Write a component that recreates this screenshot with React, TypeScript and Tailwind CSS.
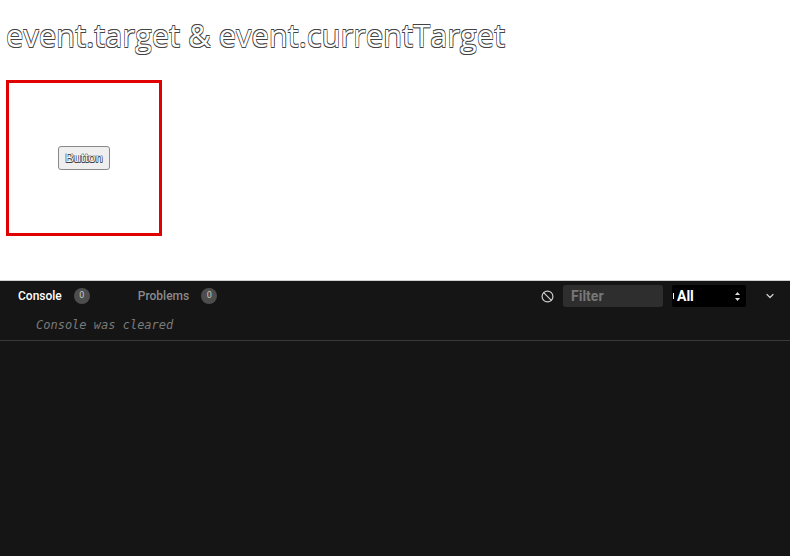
import { Ban, ChevronDown } from 'lucide-react';

const Badge = ({ n }: { n: number }) => (
  <span className="ml-3 inline-flex h-4 w-4 items-center justify-center rounded-full bg-[#4d4d4d] text-[9px] text-[#c8c8c8]">
    {n}
  </span>
);

export default function App() {
  return (
    <div className="flex h-[556px] w-[790px] flex-col bg-white font-['Open_Sans',sans-serif]">
      {/* preview area */}
      <div className="h-[280px] px-[6px] pt-[17px]">
        <h1 className="text-[30.9px] leading-[36px] text-white [text-shadow:-0.6px_-0.6px_0_#444,0.6px_-0.6px_0_#444,-0.6px_0.6px_0_#444,0.6px_0.6px_0_#444]">
          event.target &amp; event.currentTarget
        </h1>
        <div className="mt-[27px] flex h-[156px] w-[156px] items-center justify-center border-[3px] border-[#e00000]">
          <button className="rounded-[3px] border border-[#888] bg-[#efefef] px-[6px] py-[1px] font-['Liberation_Sans',sans-serif] text-[13px] text-[#f4f4f4] [text-shadow:-0.5px_-0.5px_0_#444,0.5px_-0.5px_0_#444,-0.5px_0.5px_0_#444,0.5px_0.5px_0_#444]">
            Button
          </button>
        </div>
      </div>

      {/* devtools */}
      <div className="flex flex-1 flex-col border-t border-[#cfcfcf] bg-[#151515] font-['Roboto',sans-serif]">
        <div className="flex h-[30px] items-center pl-[18px] pr-[14px]">
          <span className="text-[12px] font-medium text-white">Console</span>
          <Badge n={0} />
          <span className="ml-[48px] text-[12px] font-medium text-[#8a8a8a]">Problems</span>
          <Badge n={0} />
          <div className="ml-auto flex items-center">
            <Ban className="h-[13px] w-[13px] text-[#ccc]" strokeWidth={2.2} />
            <div className="ml-[9px] flex h-[22px] w-[100px] items-center rounded-[3px] bg-[#2e2e2e] px-[8px] text-[14px] font-bold text-[#777]">
              Filter
            </div>
            <div className="ml-[9px] flex h-[22px] w-[74px] items-center justify-between rounded-[2px] bg-black pl-[1px] pr-[6px] text-[14px] font-bold text-white">
              <span className="flex items-center">
                <span className="mr-[3px] h-[6px] w-[1px] bg-white" />
                All
              </span>
              <svg width="5" height="9" viewBox="0 0 5 9" className="fill-[#ddd]">
                <path d="M2.5 0 L5 3 L0 3 Z" />
                <path d="M0 6 L5 6 L2.5 9 Z" />
              </svg>
            </div>
            <ChevronDown className="ml-[18px] h-[12px] w-[12px] text-[#ccc]" strokeWidth={2.5} />
          </div>
        </div>
        <div className="flex h-[30px] items-center border-b border-[#3a3a3a] pb-[1px] pl-[36px] font-['DejaVu_Sans_Mono',monospace] text-[12px] italic text-[#7a7a7a]">
          Console was cleared
        </div>
      </div>
    </div>
  );
}
